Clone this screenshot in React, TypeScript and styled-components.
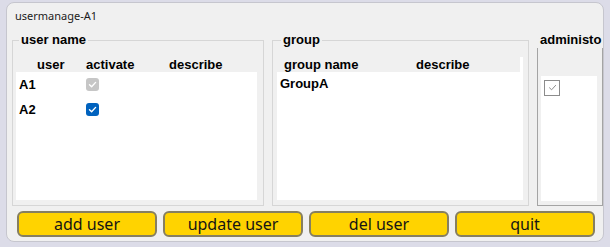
import React from "react";
import styled, { createGlobalStyle } from "styled-components";

const Global = createGlobalStyle`
  html, body { margin: 0; padding: 0; background: #dcdce8; }
  body { font-family: "Liberation Sans", Arial, sans-serif; }
`;

const Window = styled.div`
  box-sizing: border-box;
  width: 598px;
  height: 240px;
  margin: 2px 0 0 6px;
  background: #f0f0f0;
  border: 1px solid #c6c6ce;
  border-radius: 8px;
  overflow: hidden;
  display: flex;
  flex-direction: column;
`;

const Title = styled.div`
  margin: 5px 0 0 8px;
  height: 16px;
  font: 11px/16px "Noto Sans", sans-serif;
  color: #1b1b1b;
`;

const Panels = styled.div`
  display: flex;
  gap: 8px;
  margin: 9px 0 0 5px;
  height: 173px;
`;

const GroupBox = styled.fieldset<{ $w: number; $pl: number; $pr: number }>`
  box-sizing: border-box;
  flex-shrink: 0;
  width: ${(p) => p.$w}px;
  margin: 0;
  min-width: 0;
  padding: 10px ${(p) => p.$pr}px 5px ${(p) => p.$pl}px;
  border: 1px solid #d6d6d6;
  display: flex;
  flex-direction: column;
`;

const Legend = styled.legend<{ $ml: number }>`
  margin-left: ${(p) => p.$ml}px;
  padding: 0 2px;
  font: bold 13px/14px "Liberation Sans", Arial, sans-serif;
  color: #000;
`;

const List = styled.div`
  flex: 1;
  background: #fff;
  display: flex;
  flex-direction: column;
`;

const HeaderRow = styled.div<{ $cols: string; $trim?: number }>`
  display: grid;
  grid-template-columns: ${(p) => p.$cols};
  height: 15px;
  margin-right: ${(p) => p.$trim ?? 0}px;
  background: #f0f0f0;
  font: bold 13px/15px "Liberation Sans", Arial, sans-serif;
  color: #000;
`;

const Cell = styled.div<{ $pl: number }>`
  padding-left: ${(p) => p.$pl}px;
  white-space: nowrap;
  display: flex;
  align-items: center;
`;

const Row = styled.div<{ $cols: string; $h: number }>`
  display: grid;
  grid-template-columns: ${(p) => p.$cols};
  height: ${(p) => p.$h}px;
  font: bold 13px/15px "Liberation Sans", Arial, sans-serif;
  color: #000;
`;

const CheckBox = styled.span<{ $kind: "disabled" | "on" | "outline" }>`
  box-sizing: border-box;
  display: inline-flex;
  align-items: center;
  justify-content: center;
  width: ${(p) => (p.$kind === "outline" ? 16 : 13)}px;
  height: ${(p) => (p.$kind === "outline" ? 16 : 13)}px;
  border-radius: ${(p) => (p.$kind === "outline" ? 0 : 3)}px;
  background: ${(p) =>
    p.$kind === "on" ? "#0062be" : p.$kind === "disabled" ? "#c6c6c6" : "#fff"};
  border: ${(p) => (p.$kind === "outline" ? "1px solid #8c8c8c" : "none")};
`;

const AdminCol = styled.div`
  width: 66px;
  flex-shrink: 0;
  display: flex;
  flex-direction: column;
`;

const AdminLabel = styled.div`
  height: 14px;
  padding-left: 3px;
  font: bold 13px/14px "Liberation Sans", Arial, sans-serif;
  white-space: nowrap;
  color: #000;
`;

const AdminFrame = styled.div`
  box-sizing: border-box;
  flex: 1;
  margin-top: 1px;
  border: 1px solid #a4a4a4;
  border-top: none;
  padding: 28px 5px 4px 3px;
  display: flex;
`;

const AdminList = styled.div`
  flex: 1;
  background: #fff;
  padding: 2px 3px;
`;

const ButtonBar = styled.div`
  display: flex;
  gap: 6px;
  margin: 5px 0 0 10px;
`;

const Button = styled.button`
  box-sizing: border-box;
  width: 140px;
  height: 26px;
  padding: 1px 0 0;
  background: #ffd300;
  border: 2px solid #867f60;
  border-radius: 6px;
  font: 16px/21px "Noto Sans", sans-serif;
  color: #151515;
`;

const Tick = ({ color, w = 1.4 }: { color: string; w?: number }) => (
  <svg width="9" height="9" viewBox="0 0 9 9">
    <path d="M1.5 4.8 L3.6 6.8 L7.6 2.4" fill="none" stroke={color} strokeWidth={w} strokeLinecap="round" strokeLinejoin="round" />
  </svg>
);

const userCols = "70px 80px 1fr";
const groupCols = "134px 1fr";

export default function App() {
  return (
    <>
      <Global />
      <Window>
        <Title>usermanage-A1</Title>
        <Panels>
          <GroupBox $w={252} $pl={3} $pr={6}>
            <Legend $ml={3}>user name</Legend>
            <List>
              <HeaderRow $cols={userCols}>
                <Cell $pl={21}>user</Cell>
                <Cell $pl={0}>activate</Cell>
                <Cell $pl={3}>describe</Cell>
              </HeaderRow>
              <Row $cols={userCols} $h={25}>
                <Cell $pl={3}>A1</Cell>
                <Cell $pl={0}>
                  <CheckBox $kind="disabled">
                    <Tick color="#ffffff" />
                  </CheckBox>
                </Cell>
                <Cell $pl={3} />
              </Row>
              <Row $cols={userCols} $h={25}>
                <Cell $pl={3}>A2</Cell>
                <Cell $pl={0}>
                  <CheckBox $kind="on">
                    <Tick color="#ffffff" />
                  </CheckBox>
                </Cell>
                <Cell $pl={3} />
              </Row>
            </List>
          </GroupBox>
          <GroupBox $w={257} $pl={4} $pr={5}>
            <Legend $ml={4}>group</Legend>
            <List>
              <HeaderRow $cols={groupCols} $trim={3}>
                <Cell $pl={7}>group name</Cell>
                <Cell $pl={5}>describe</Cell>
              </HeaderRow>
              <Row $cols={groupCols} $h={22}>
                <Cell $pl={3}>GroupA</Cell>
                <Cell $pl={5} />
              </Row>
            </List>
          </GroupBox>
          <AdminCol>
            <AdminLabel>administo</AdminLabel>
            <AdminFrame>
              <AdminList>
                <CheckBox $kind="outline">
                  <Tick color="#8c8c8c" w={1} />
                </CheckBox>
              </AdminList>
            </AdminFrame>
          </AdminCol>
        </Panels>
        <ButtonBar>
          <Button>add user</Button>
          <Button>update user</Button>
          <Button>del user</Button>
          <Button>quit</Button>
        </ButtonBar>
      </Window>
    </>
  );
}
